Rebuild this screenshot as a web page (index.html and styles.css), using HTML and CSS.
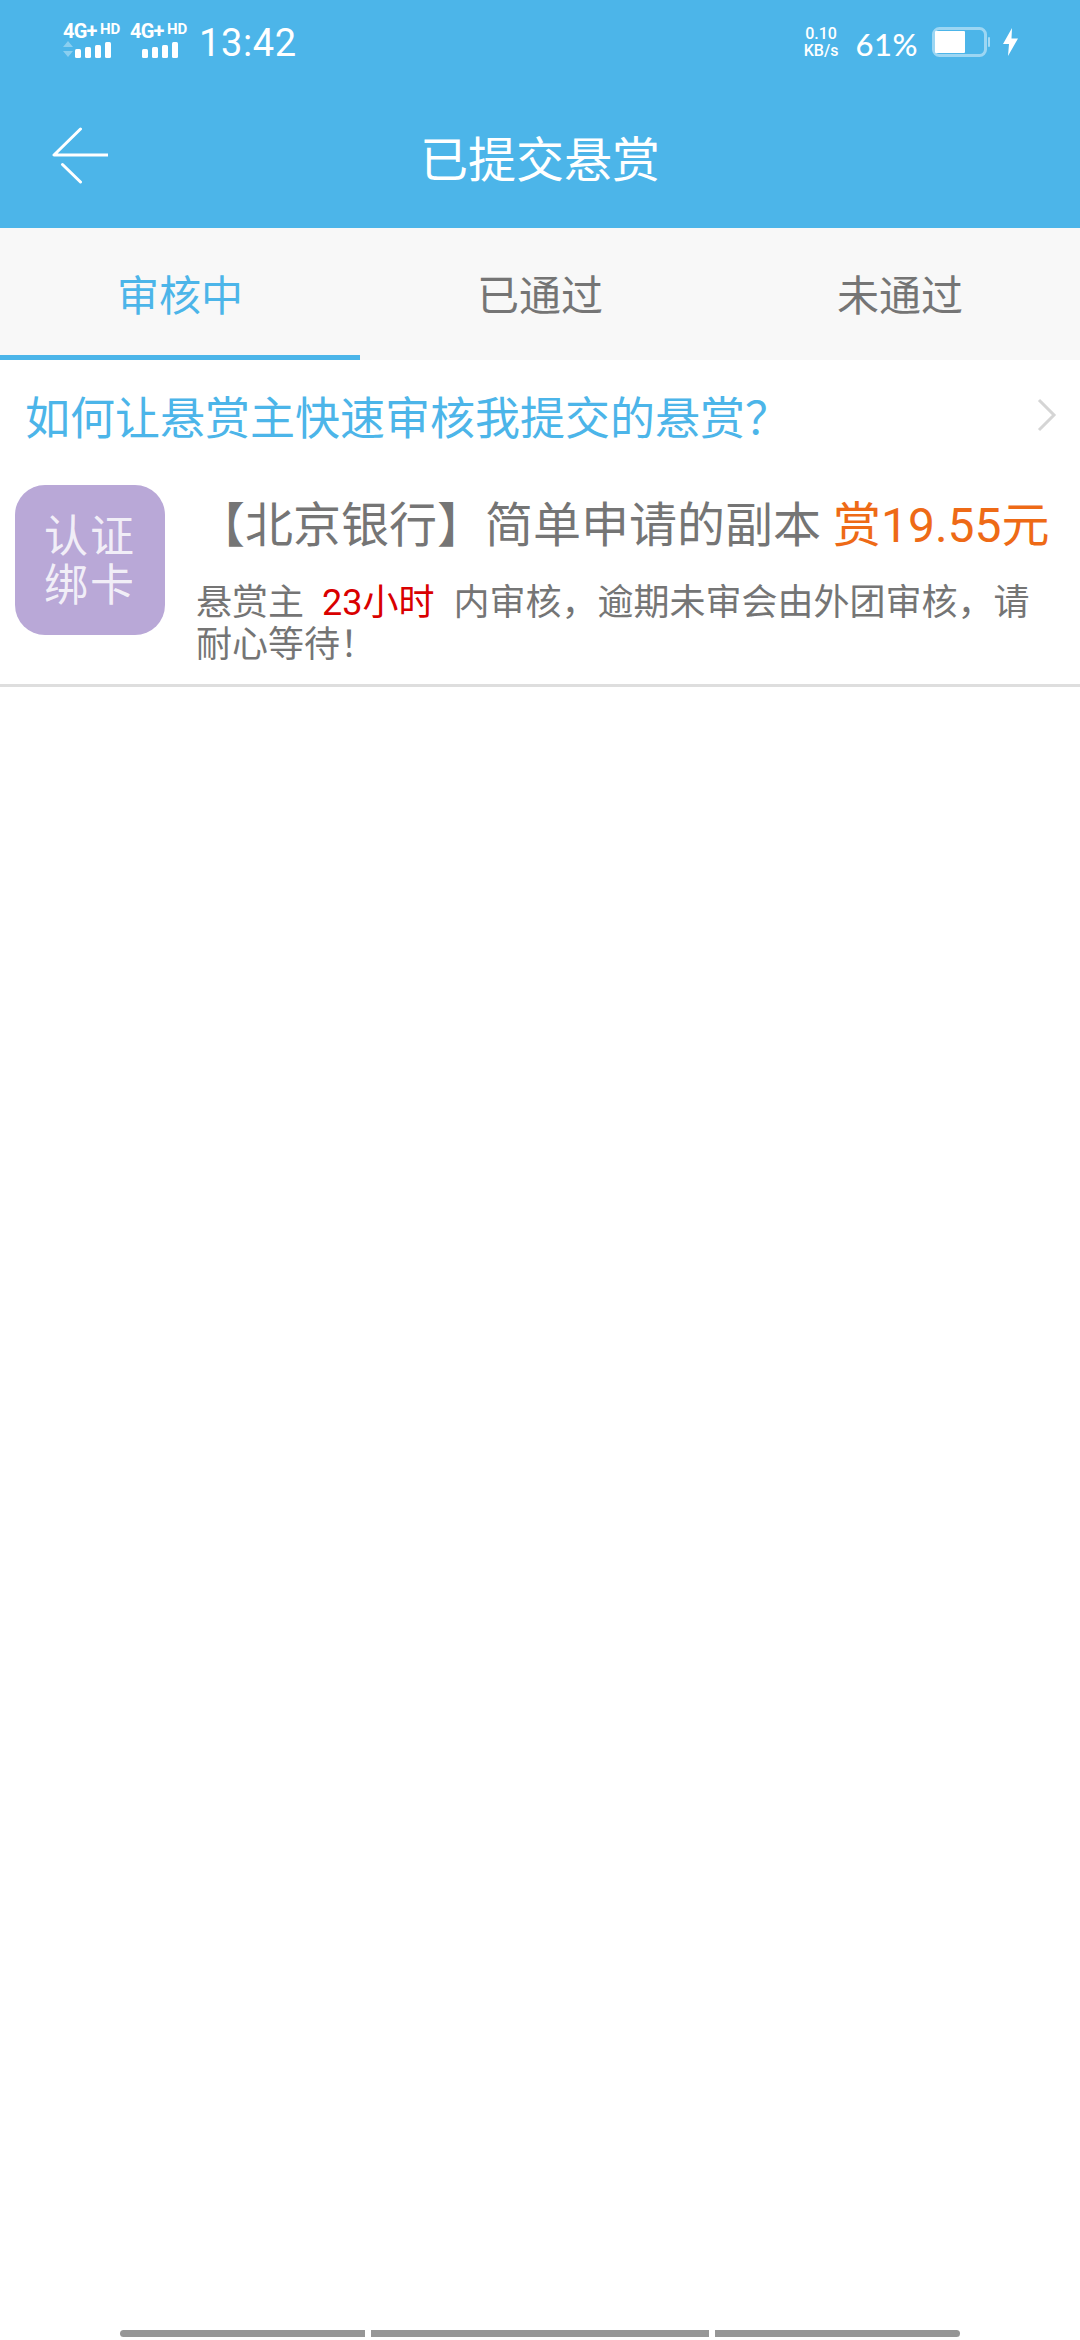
FILE: index.html
```html
<!DOCTYPE html>
<html lang="zh-CN">
<head>
<meta charset="utf-8">
<title>已提交悬赏</title>
<link rel="stylesheet" href="styles.css">
</head>
<body>
<div class="page">
  <header class="header">
    <div class="status">
      <div class="status-left">
        <div class="sim">
          <div class="sim-label"><span class="net">4G+</span><span class="hd">HD</span></div>
          <div class="sim-bars">
            <svg class="updown" width="12" height="18" viewBox="0 0 12 18"><path d="M5 1l5 6H0zM5 17l5-6H0z" fill="#fff" fill-opacity=".35"/></svg>
            <i class="bar b1"></i><i class="bar b2"></i><i class="bar b3"></i><i class="bar b4"></i>
          </div>
        </div>
        <div class="sim">
          <div class="sim-label"><span class="net">4G+</span><span class="hd">HD</span></div>
          <div class="sim-bars">
            <svg class="updown" width="12" height="18" viewBox="0 0 12 18"></svg>
            <i class="bar b1"></i><i class="bar b2"></i><i class="bar b3"></i><i class="bar b4"></i>
          </div>
        </div>
        <span class="time">13:42</span>
      </div>
      <div class="status-right">
        <div class="speed"><span>0.10</span><span>KB/s</span></div>
        <span class="pct">61%</span>
        <svg class="battery" width="58" height="30" viewBox="0 0 58 30">
          <rect x="1.500" y="1.500" width="52" height="27" rx="6" fill="none" stroke="#fff" stroke-opacity=".45" stroke-width="3"/>
          <rect x="3" y="4" width="30" height="22" rx="1" fill="#fff"/>
          <rect x="56" y="10" width="2" height="10" rx="1" fill="#fff" fill-opacity=".5"/>
        </svg>
        <svg class="bolt" width="15" height="28" viewBox="0 0 15 28"><path d="M9 0L0 16H6L5 28L15 10.500H8.500z" fill="#fff"/></svg>
      </div>
    </div>
    <div class="toolbar">
      <svg class="back" width="60" height="60" viewBox="0 0 60 60"><path d="M32.500 3L6 29H60M14.500 38.500L32.500 56" fill="none" stroke="#fff" stroke-width="3" stroke-linecap="round" stroke-linejoin="round"/></svg>
      <h1 class="title">已提交悬赏</h1>
      <div class="toolbar-spacer"></div>
    </div>
  </header>

  <nav class="tabs">
    <div class="tab active">审核中</div>
    <div class="tab">已通过</div>
    <div class="tab">未通过</div>
  </nav>

  <main class="content">
    <div class="help">
      <span class="help-text">如何让悬赏主快速审核我提交的悬赏&#65311;</span>
      <svg class="chevron" width="20" height="34" viewBox="0 0 20 34"><path d="M2 2L17 17L2 32" fill="none" stroke="#d5d5d5" stroke-width="3"/></svg>
    </div>
    <article class="task">
      <div class="task-icon"><span>认证</span><span>绑卡</span></div>
      <div class="task-body">
        <div class="task-title">【北京银行】简单申请的副本 <span class="reward">赏19.55元</span></div>
        <p class="task-desc">悬赏主<em class="hours">23小时</em>内审核&#65292;逾期未审会由外团审核&#65292;请耐心等待&#65281;</p>
      </div>
    </article>
  </main>

  <div class="navbar">
    <i class="seg seg-a"></i><i class="seg seg-b"></i><i class="seg seg-c"></i>
  </div>
</div>
</body>
</html>
```
FILE: styles.css
```css
* { box-sizing: border-box; }
html, body { margin: 0; padding: 0; }
body {
  font-family: Roboto, "Noto Sans CJK SC", sans-serif;
  background: #fff;
  color: #757575;
}
.page { width: 1080px; height: 2340px; display: flex; flex-direction: column; overflow: hidden; }

.header { background: #4cb5e9; height: 228px; flex: none; color: #fff; }
.status { height: 84px; padding: 22px 62px 0 63px; display: flex; justify-content: space-between; align-items: flex-start; }
.status-left { display: flex; align-items: flex-start; }
.sim { width: 67px; display: flex; flex-direction: column; }
.sim-label { height: 18px; display: flex; align-items: center; line-height: 18px; font-weight: 700; white-space: nowrap; }
.net { font-size: 20px; letter-spacing: -.8px; width: 37px; }
.hd { font-size: 15px; margin-top: -5px; }
.sim-bars { height: 18px; display: flex; align-items: flex-end; }
.updown { margin-right: -4px; display: block; flex: none; }
.bar { display: block; width: 6px; background: #fff; border-radius: 1.5px; margin-left: 4px; }
.b1 { height: 9px; }
.b2 { height: 11px; }
.b3 { height: 13px; }
.b4 { height: 16px; }
.time { font-size: 38px; line-height: 40px; margin: 1px 0 0 2px; letter-spacing: .6px; }

.status-right { display: flex; align-items: center; height: 40px; }
.speed { display: flex; flex-direction: column; align-items: center; font-size: 16px; font-weight: 500; line-height: 17px; width: 37px; }
.pct { font-family: Lato, sans-serif; font-size: 31px; font-weight: 500; margin: 4px 0 0 16px; letter-spacing: .5px; }
.battery { margin-left: 14px; display: block; }
.bolt { margin-left: 13px; display: block; }

.toolbar { height: 144px; display: flex; align-items: center; padding-left: 48px; }
.back { flex: none; display: block; }
.title { flex: 1; margin: 0; text-align: center; font-size: 48px; font-weight: 400; line-height: 60px; padding-top: 10px; }
.toolbar-spacer { width: 108px; flex: none; }

.tabs { height: 132px; flex: none; display: flex; background: #f8f8f8; }
.tab { flex: 1; display: flex; align-items: center; justify-content: center; font-size: 42px; padding-top: 2px; border-bottom: 5px solid transparent; }
.tab.active { color: #4cb5e9; border-bottom-color: #4cb5e9; }

.content { flex: 1; }
.help { height: 120px; padding: 0 23px 1px 25px; display: flex; align-items: center; justify-content: space-between; }
.help-text { font-size: 45px; color: #4cb5e9; line-height: 60px; }
.chevron { display: block; margin-bottom: 9px; }

.task { display: flex; padding: 5px 0 23px 15px; border-bottom: 3px solid #dedede; height: 207px; }
.task-icon {
  width: 150px; height: 150px; padding-top: 4px; flex: none; border-radius: 30px; background: #b9a8d7;
  display: flex; flex-direction: column; align-items: center; justify-content: center;
  color: rgba(255,255,255,.82); font-size: 44px; line-height: 49px; letter-spacing: 2px;
}
.task-body { padding-left: 32px; flex: 1; min-width: 0; }
.task-title { font-size: 48px; line-height: 62px; white-space: nowrap; margin-top: 10px; }
.reward { color: #ee6a16; }
.task-desc { margin: 25px 30px 0 -1px; font-size: 36px; line-height: 42px; }
.hours { font-style: normal; color: #d90000; margin: 0 19px 0 18px; }

.navbar { height: 10px; flex: none; display: flex; padding-left: 120px; }
.seg { display: block; height: 7px; background: #969696; margin-right: 6px; }
.seg-a { width: 245px; border-radius: 3.5px 0 0 3.5px; }
.seg-b { width: 338px; }
.seg-c { width: 245px; border-radius: 0 3.5px 3.5px 0; }
```
